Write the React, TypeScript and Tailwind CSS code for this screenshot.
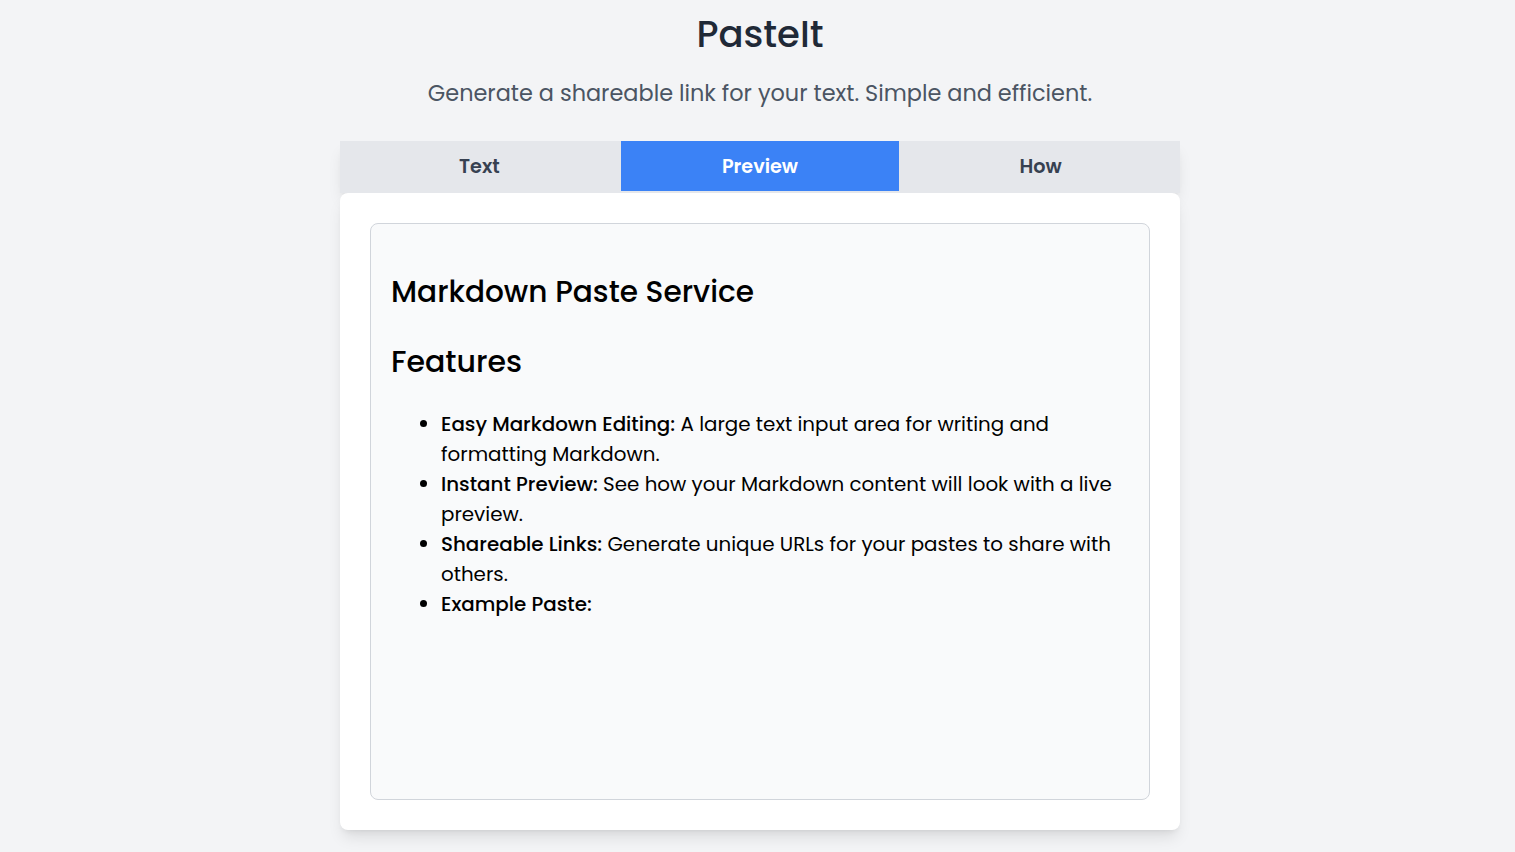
import { useState } from "react";

const tabs = ["Text", "Preview", "How"];

const features = [
  { label: "Easy Markdown Editing:", text: "A large text input area for writing and formatting Markdown." },
  { label: "Instant Preview:", text: "See how your Markdown content will look with a live preview." },
  { label: "Shareable Links:", text: "Generate unique URLs for your pastes to share with others." },
  { label: "Example Paste:", text: "" },
];

export default function App() {
  const [activeTab, setActiveTab] = useState("Preview");

  return (
    <div
      className="min-h-screen bg-[#f3f4f6] pt-[14px] pb-6 pl-[5px]"
      style={{ fontFamily: '"Poppins", "Open Sans", sans-serif' }}
    >
      {/* Header */}
      <h1 className="text-center text-[37px] font-medium leading-[40px] text-[#1f2937]">PasteIt</h1>
      <p className="mt-[24px] text-center text-[22.4px] leading-[31px] text-[#4b5563]">
        Generate a shareable link for your text. Simple and efficient.
      </p>

      <div className="mx-auto mt-[32px] w-[840px]">
        {/* Tabs */}
        <div className="flex h-[52px] items-start bg-[#e5e7eb] shadow-lg">
          {tabs.map((tab) => (
            <button
              key={tab}
              onClick={() => setActiveTab(tab)}
              className={`h-[50px] flex-1 pt-[2px] text-[19.2px] font-semibold ${
                activeTab === tab ? "mx-[2px] bg-[#3b82f6] text-white" : "text-[#374151]"
              }`}
            >
              {tab}
            </button>
          ))}
        </div>

        {/* Card */}
        <div className="rounded-lg bg-white p-[30px] shadow-lg">
          <div className="h-[577px] overflow-auto rounded-lg border border-[#d1d5db] bg-[#f9fafb] px-5 pt-[21px] text-black">
            <h2 className="mt-[23px] text-[29.6px] font-medium leading-[48px]">Markdown Paste Service</h2>
            <h3 className="mt-[23px] text-[30px] font-medium leading-[45px]">Features</h3>
            <ul className="mt-[25px] list-disc pl-[50px] text-[19.85px] leading-[30px]">
              {features.map((f) => (
                <li key={f.label}>
                  <strong className="font-medium">{f.label}</strong>
                  {f.text && " " + f.text}
                </li>
              ))}
            </ul>
          </div>
        </div>
      </div>
    </div>
  );
}
